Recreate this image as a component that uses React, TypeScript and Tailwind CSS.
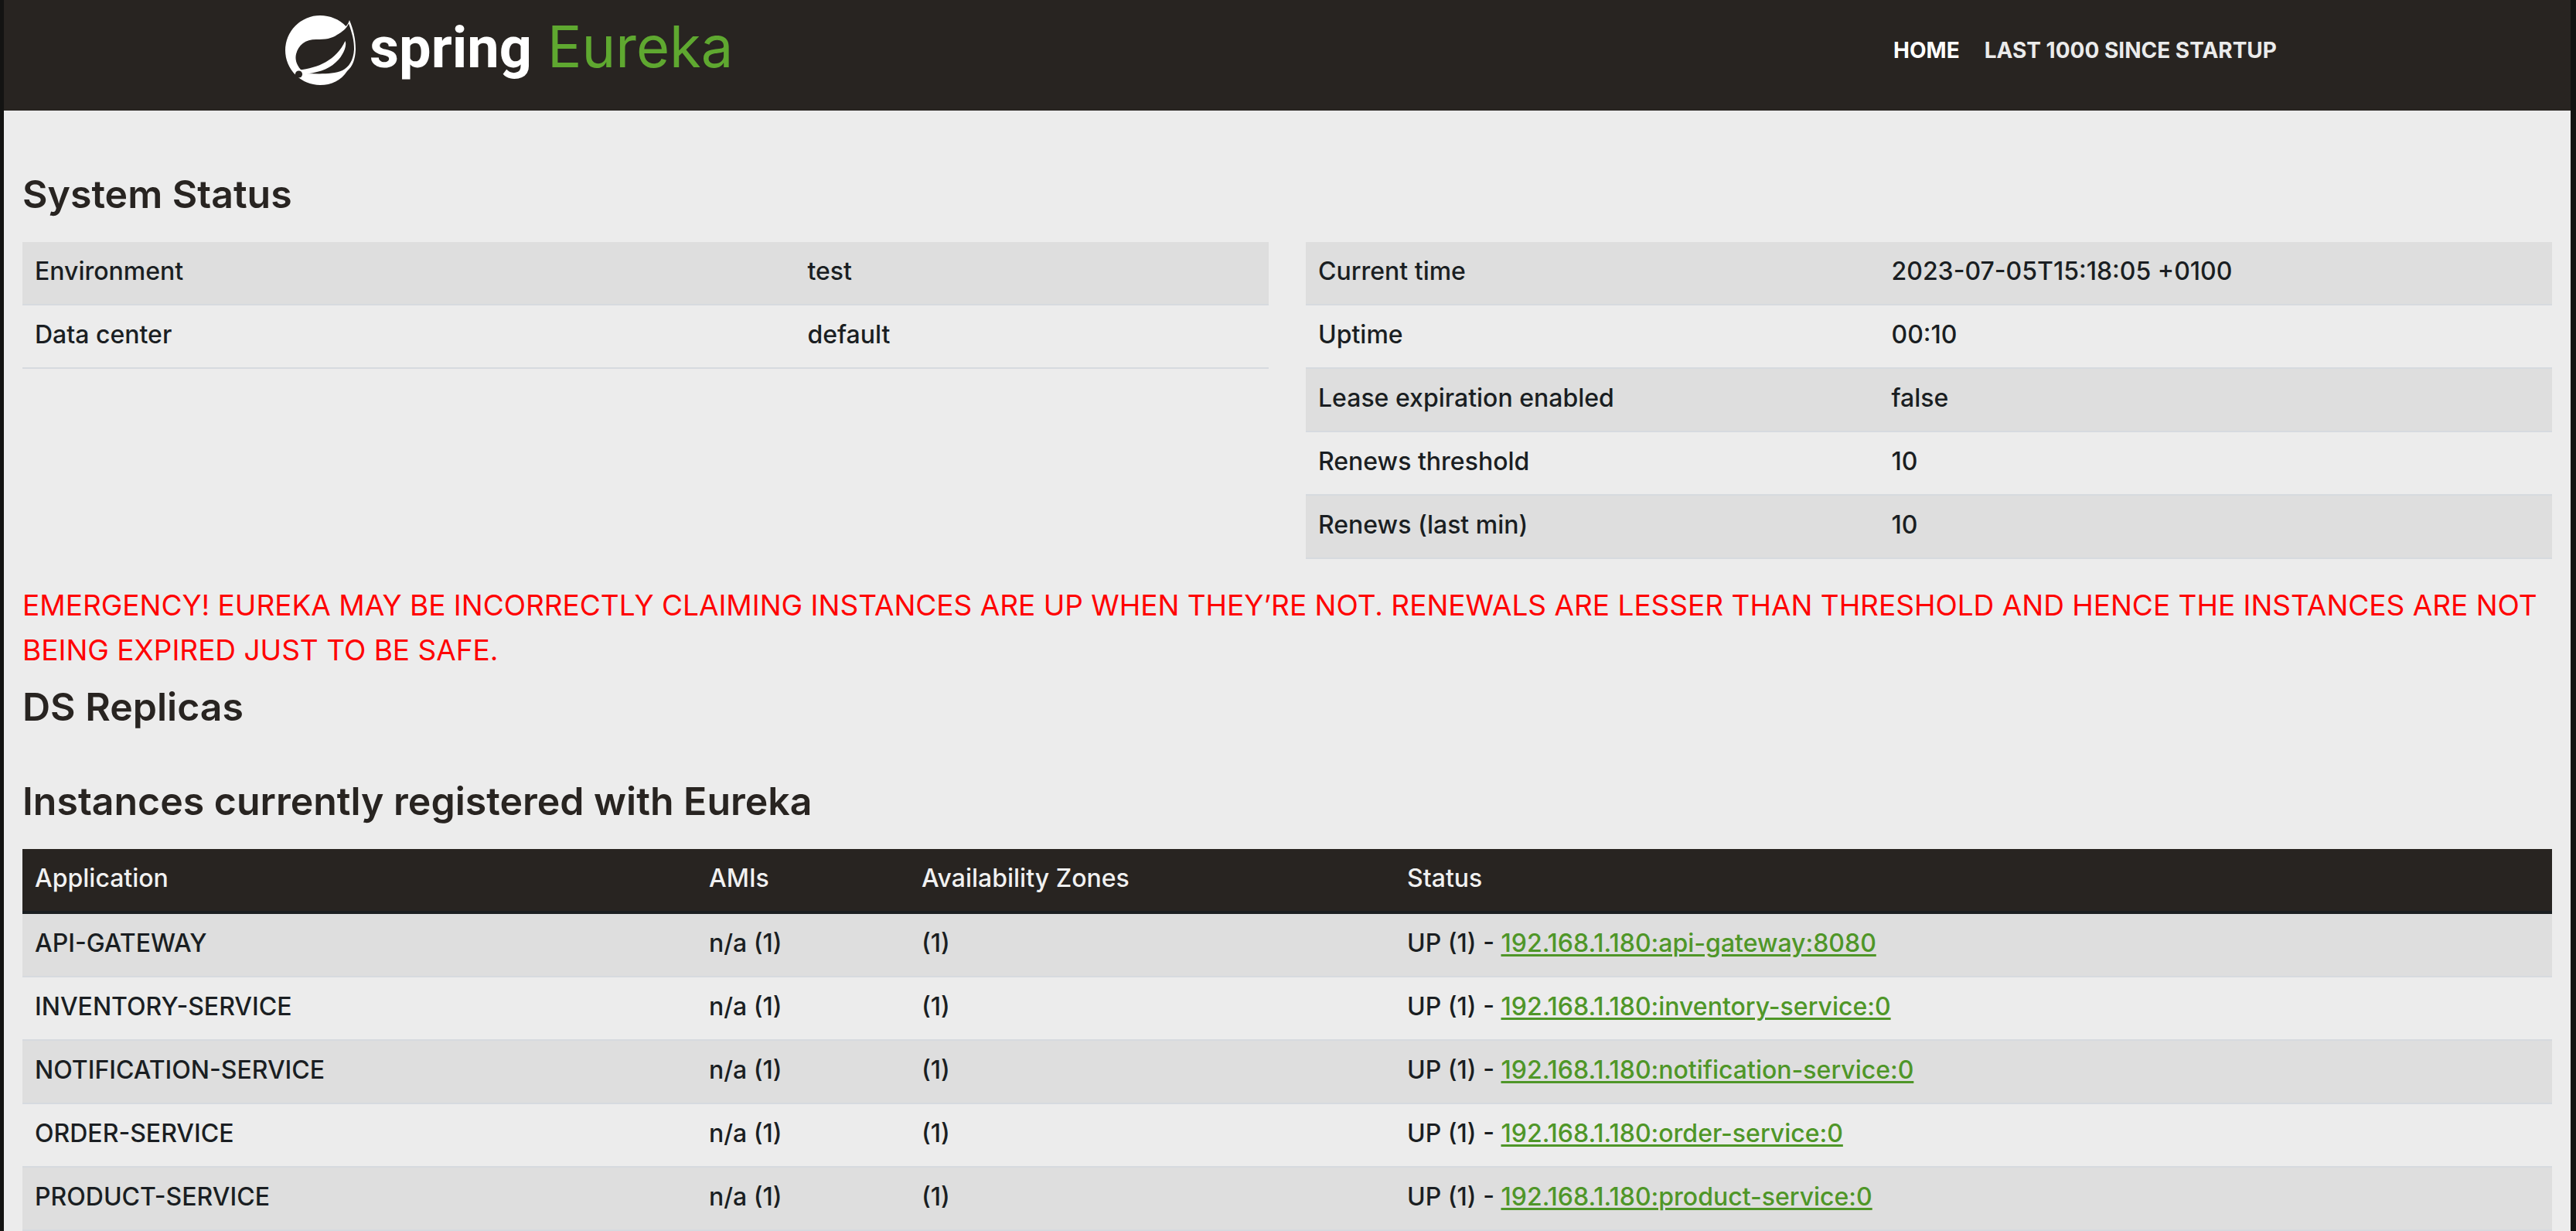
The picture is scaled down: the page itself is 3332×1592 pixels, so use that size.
import React from 'react';

const generalInfo: [string, string][] = [
  ['Environment', 'test'],
  ['Data center', 'default'],
];

const runtimeInfo: [string, string][] = [
  ['Current time', '2023-07-05T15:18:05 +0100'],
  ['Uptime', '00:10'],
  ['Lease expiration enabled', 'false'],
  ['Renews threshold', '10'],
  ['Renews (last min)', '10'],
];

const instances = [
  { name: 'API-GATEWAY', id: '192.168.1.180:api-gateway:8080' },
  { name: 'INVENTORY-SERVICE', id: '192.168.1.180:inventory-service:0' },
  { name: 'NOTIFICATION-SERVICE', id: '192.168.1.180:notification-service:0' },
  { name: 'ORDER-SERVICE', id: '192.168.1.180:order-service:0' },
  { name: 'PRODUCT-SERVICE', id: '192.168.1.180:product-service:0' },
];

const cell = 'px-4 pt-[14px] pb-[18px] font-medium';
const row = 'border-b-2 border-[#d6dadf] odd:bg-[#dedede]';
const heading = 'text-[50px] leading-[60px] font-semibold text-[#282421]';

function SpringLeaf() {
  return (
    <svg viewBox="0 0 91 90" className="h-[90px] w-[91px] shrink-0" aria-hidden="true">
      <path
        fill="#fff"
        d="M83 6C88 18 91 30 91 44C90.500 57 87 66 80 72C72 84 60 90 45 90A45 45 0 0 1 45 0C58 0 70 5 78.500 14C80.500 12 82 9 83 6Z"
      />
      <path
        fill="#282421"
        d="M82 10.500C86.500 23 89.300 33 89 44C88.300 58 82 67 74 71C66 75 55 75 44 75.500L27 75L20 70C14 63 12.500 56 14 50C17 38 26 31 40 31C52 31 60 30 67 25C74 21 79 17 82 10.500Z"
      />
      <path fill="#fff" d="M18 70.500C42 68 66 58 77.500 33C80 38 76 49 69 57C59 68 47 73 28 75.500L21 77Z" />
      <circle cx="17.500" cy="76" r="4.600" fill="#282421" />
      <path fill="#282421" d="M10 75L17 80L17 86L8 80Z" />
    </svg>
  );
}

function InfoTable({ rows, labelWidth, label }: { rows: [string, string][]; labelWidth: string; label: string }) {
  return (
    <table aria-label={label} className="w-full table-fixed border-collapse text-left">
      <colgroup>
        <col className={labelWidth} />
        <col />
      </colgroup>
      <tbody>
        {rows.map(([name, value]) => (
          <tr key={name} className={row}>
            <td className={cell}>{name}</td>
            <td className={cell}>{value}</td>
          </tr>
        ))}
      </tbody>
    </table>
  );
}

export default function App() {
  return (
    <div className="min-h-screen bg-[#131312] pr-[7px] pl-[5px] font-['Inter',sans-serif] text-[32px] leading-[48px] text-[#1a1e22]">
      <div className="min-h-screen bg-[#ececec]">
        <header className="bg-[#282421]">
          <div className="mx-auto flex max-w-[2640px] items-center justify-between px-6 pt-5 pb-[33px]">
            <a href="#" className="flex items-start gap-[18px]">
              <SpringLeaf />
              <span className="text-[74px] leading-[80px] whitespace-nowrap text-white">
                <span className="mr-5 font-['Roboto',sans-serif] font-bold">spring</span>
                <span className="text-[#5fa830]">Eureka</span>
              </span>
            </a>
            <nav className="flex text-[28px] leading-10 font-bold">
              <a href="#" className="px-4 text-white">HOME</a>
              <a href="#" className="px-4 text-[#ebebeb]">LAST 1000 SINCE STARTUP</a>
            </nav>
          </div>
        </header>

        <main className="px-6 pt-[78px]">
          <h1 className={heading}>System Status</h1>
          <div className="mt-8 grid grid-cols-2 items-start gap-12">
            <InfoTable rows={generalInfo} labelWidth="w-[62%]" label="General information" />
            <InfoTable rows={runtimeInfo} labelWidth="w-[46%]" label="Runtime information" />
          </div>

          <p className="mt-[31px] text-[37px] leading-[58px] text-[#ff0000]">
            EMERGENCY! EUREKA MAY BE INCORRECTLY CLAIMING INSTANCES ARE UP WHEN THEY’RE NOT. RENEWALS ARE LESSER THAN
            THRESHOLD AND HENCE THE INSTANCES ARE NOT BEING EXPIRED JUST TO BE SAFE.
          </p>

          <h1 className={`mt-[14px] ${heading}`}>DS Replicas</h1>
          <h1 className={`mt-[62px] ${heading}`}>Instances currently registered with Eureka</h1>

          <table aria-label="Registered instances" className="mt-8 w-full table-fixed border-collapse text-left">
            <colgroup>
              <col className="w-[872px]" />
              <col className="w-[275px]" />
              <col className="w-[628px]" />
              <col />
            </colgroup>
            <thead>
              <tr className="border-b-4 border-[#1a1e21] bg-[#282421] text-[#f1f1f1]">
                <th className={cell}>Application</th>
                <th className={cell}>AMIs</th>
                <th className={cell}>Availability Zones</th>
                <th className={cell}>Status</th>
              </tr>
            </thead>
            <tbody>
              {instances.map(({ name, id }) => (
                <tr key={name} className={row}>
                  <td className={cell}>{name}</td>
                  <td className={cell}>n/a (1)</td>
                  <td className={cell}>(1)</td>
                  <td className={cell}>
                    UP (1) -{' '}
                    <a href="#" className="text-[#4f9628] underline decoration-[3px] underline-offset-[3px]">
                      {id}
                    </a>
                  </td>
                </tr>
              ))}
            </tbody>
          </table>
        </main>
      </div>
    </div>
  );
}
